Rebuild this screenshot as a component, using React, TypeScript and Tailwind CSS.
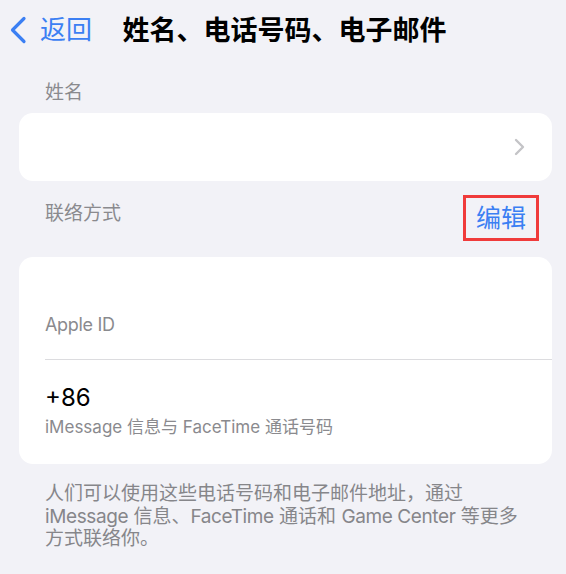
export default function App() {
  return (
    <div className="min-h-screen w-full bg-[#f2f2f7] font-['Inter','Noto_Sans_CJK_SC',sans-serif] antialiased">
      {/* nav bar */}
      <header className="grid h-[60px] grid-cols-[1fr_auto_1fr] items-center">
        <div className="flex items-center pl-[9px] text-[#3b7ff3]">
          <svg width="18" height="28" viewBox="0 0 18 28" fill="none">
            <path d="M15 2.5 L3.5 14 L15 25.5" stroke="currentColor" strokeWidth="3.2" strokeLinecap="round" strokeLinejoin="round" />
          </svg>
          <span className="ml-[13px] text-[26px] leading-none">返回</span>
        </div>
        <h1 className="ml-[3px] text-[27px] leading-none font-bold text-black">姓名、电话号码、电子邮件</h1>
        <div />
      </header>

      {/* name section */}
      <div className="mt-[21px] pl-[45px] text-[19px] leading-[24px] text-[#8a8a8e]">姓名</div>
      <div className="mt-[8px] mr-[14px] ml-[19px] flex h-[68px] items-center justify-end rounded-[14px] bg-white pr-[27px]">
        <svg width="11" height="18" viewBox="0 0 11 18" fill="none">
          <path d="M2 2 L9 9 L2 16" stroke="#c4c4c7" strokeWidth="2.4" strokeLinecap="round" strokeLinejoin="round" />
        </svg>
      </div>

      {/* contact header */}
      <div className="mt-[14px] mb-[16px] flex items-start justify-between pl-[45px] pr-[27px]">
        <span className="mt-[7px] text-[19px] leading-[24px] text-[#8a8a8e]">联络方式</span>
        <div className="flex h-[46px] w-[76px] items-center justify-center border-[3px] border-[#f03b3b]">
          <span className="text-[25px] leading-none text-[#3b7ff3]">编辑</span>
        </div>
      </div>

      {/* contact card */}
      <div className="mr-[14px] ml-[19px] rounded-[14px] bg-white">
        <div className="pt-[56px] pb-[22px] pl-[26px] text-[18px] leading-[24px] tracking-[-0.3px] text-[#8a8a8e]">Apple ID</div>
        <div className="ml-[26px] border-t border-[#dcdcdf]" />
        <div className="pt-[23px] pb-[26px] pl-[26px]">
          <div className="text-[24px] leading-[30px] text-black">+86</div>
          <div className="mt-[3px] text-[17px] leading-[22px] text-[#8a8a8e]">iMessage 信息与 FaceTime 通话号码</div>
        </div>
      </div>

      {/* footer note */}
      <p className="pt-[19px] pl-[45px] text-[19px] leading-[22.5px] text-[#86868a]">
        人们可以使用这些电话号码和电子邮件地址，通过
        <br />
        <span className="tracking-[-0.4px]">iMessage</span> 信息、<span className="tracking-[-0.4px]">FaceTime</span> 通话和 <span className="tracking-[-0.4px]">Game Center</span> 等更多
        <br />
        方式联络你。
      </p>
    </div>
  );
}
